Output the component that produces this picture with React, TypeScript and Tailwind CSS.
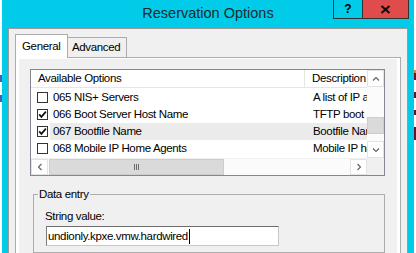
import React from 'react';

const options = [
  { name: '065 NIS+ Servers', desc: 'A list of IP addresses for NIS+ servers', checked: false, selected: false },
  { name: '066 Boot Server Host Name', desc: 'TFTP boot server host name', checked: true, selected: false },
  { name: '067 Bootfile Name', desc: 'Bootfile Name', checked: true, selected: true },
  { name: '068 Mobile IP Home Agents', desc: 'Mobile IP home agents in priority order', checked: false, selected: false },
];

function Chevron({ dir }: { dir: 'up' | 'down' | 'left' | 'right' }) {
  const vertical = dir === 'up' || dir === 'down';
  const d = {
    up: 'M1 4.5 L4 1.5 L7 4.5',
    down: 'M1 1.5 L4 4.5 L7 1.5',
    left: 'M4.5 1 L1.5 4 L4.5 7',
    right: 'M1.5 1 L4.5 4 L1.5 7',
  }[dir];
  return (
    <svg
      aria-hidden="true"
      width={vertical ? 8 : 6}
      height={vertical ? 6 : 8}
      viewBox={vertical ? '0 0 8 6' : '0 0 6 8'}
      fill="none"
    >
      <path d={d} stroke="#606060" strokeWidth="1.1" />
    </svg>
  );
}

function Checkbox({ checked }: { checked: boolean }) {
  return (
    <span className="flex h-[11px] w-[11px] shrink-0 items-center justify-center border border-[#333333] bg-white">
      {checked && (
        <svg aria-hidden="true" width="9" height="9" viewBox="0 0 9 9" fill="none">
          <path d="M1.2 4.4 L3.4 6.9 L7.9 1.6" stroke="#111111" strokeWidth="1.7" />
        </svg>
      )}
    </span>
  );
}

export default function App() {
  return (
    <div className="flex h-[253px] w-[416px] overflow-hidden bg-white font-['Liberation_Sans',Arial,sans-serif] text-[11.5px] tracking-[-0.35px] text-black">
      {/* edge of the window behind */}
      <div className="flex w-[2px] flex-col">
        <div className="mt-[75px] h-[7px] bg-[#3a64b8]" />
        <div className="mt-[13px] h-[7px] bg-[#3a64b8]" />
      </div>

      {/* dialog window */}
      <div className="flex w-[412px] flex-col bg-[#00cbe9] px-[6px]">
        {/* title bar */}
        <div className="relative -mx-[6px] h-[28px]">
          <div className="text-center text-[14.5px] leading-[26px] tracking-normal text-[#1e2a2c]">
            Reservation Options
          </div>
          <div className="absolute right-[5px] top-0 flex h-[19px]">
            <div className="flex w-[29px] items-center justify-center border-b border-l border-[#333333] text-[12px] font-bold tracking-normal">
              ?
            </div>
            <div className="flex w-[47px] items-center justify-center border-x border-b border-[#333333] bg-[#e04c4c]">
              <svg aria-hidden="true" width="11" height="9" viewBox="0 0 11 9" fill="none">
                <path d="M1.5 1 L9.5 8 M9.5 1 L1.5 8" stroke="#111111" strokeWidth="2.2" />
              </svg>
            </div>
          </div>
        </div>

        {/* client area */}
        <div className="flex flex-1 flex-col border-x border-t border-[#9a9a9a] bg-[#f0f0f0] px-[6px] pt-[5px]">
          {/* tabs */}
          <div className="flex items-end">
            <div className="relative z-10 -mb-px h-[24px] w-[53px] border border-b-0 border-[#acacac] bg-white pl-[6px] pt-[3px] leading-[16px]">
              General
            </div>
            <div className="h-[20px] w-[59px] border-r border-t border-[#acacac] bg-[#f0f0f0] pl-[4px] pt-[1px] leading-[16px]">
              Advanced
            </div>
          </div>

          {/* tab panel */}
          <div className="flex flex-1 flex-col border-x border-t border-[#acacac] bg-white px-[3px] pt-px">
            <div className="flex flex-1 flex-col bg-[#f0f0f0] pt-[10px]">
              {/* option list */}
              <div className="ml-[11px] w-[355px] border border-[#828790] bg-white">
                <div className="grid grid-cols-[336px_17px] grid-rows-[88px_17px]">
                  <div className="flex flex-col">
                    <div className="flex h-[18px] border-b border-[#e5e5e5] leading-[17px]">
                      <div className="w-[274px] border-r border-[#e5e5e5] pl-[7px]">Available Options</div>
                      <div className="flex-1 pl-[7px]">Description</div>
                    </div>
                    <div className="mt-px flex flex-col">
                      {options.map((o) => (
                        <div key={o.name} className="flex h-[17px] items-center pl-[6px]">
                          <Checkbox checked={o.checked} />
                          <div
                            className={`ml-[2px] flex h-full min-w-0 flex-1 items-center ${
                              o.selected ? 'bg-[#ebebeb]' : ''
                            }`}
                          >
                            <div className="w-[255px] shrink-0 pl-[3px]">{o.name}</div>
                            <div className="min-w-0 flex-1 overflow-hidden whitespace-nowrap pl-[8px]">{o.desc}</div>
                          </div>
                        </div>
                      ))}
                    </div>
                  </div>

                  {/* vertical scrollbar */}
                  <div className="flex flex-col bg-[#fbfbfb]">
                    <div className="flex h-[17px] items-center justify-center border border-[#e3e3e3] bg-white">
                      <Chevron dir="up" />
                    </div>
                    <div className="flex-1 pt-[30px]">
                      <div className="h-[17px] border border-[#cdcdcd] bg-[#dadada]" />
                    </div>
                    <div className="flex h-[17px] items-center justify-center border border-[#e3e3e3] bg-white">
                      <Chevron dir="down" />
                    </div>
                  </div>

                  {/* horizontal scrollbar */}
                  <div className="flex border-t border-[#f0f0f0] bg-[#fbfbfb]">
                    <div className="flex w-[17px] items-center justify-center border border-[#e3e3e3] bg-white">
                      <Chevron dir="left" />
                    </div>
                    <div className="ml-px flex w-[175px] items-center justify-center gap-[1px] border border-[#cdcdcd] bg-[#dadada]">
                      <span className="h-[6px] w-px bg-[#6a6a6a]" />
                      <span className="h-[6px] w-px bg-[#6a6a6a]" />
                      <span className="h-[6px] w-px bg-[#6a6a6a]" />
                    </div>
                    <div className="flex-1" />
                    <div className="flex w-[17px] items-center justify-center border border-[#e3e3e3] bg-white">
                      <Chevron dir="right" />
                    </div>
                  </div>
                  <div className="bg-[#f0f0f0]" />
                </div>
              </div>

              {/* data entry */}
              <fieldset className="ml-[14px] mt-[11px] w-[352px] flex-1 border border-[#adadad] pl-[4px]">
                <legend className="px-px leading-[14px]">Data entry</legend>
                <div className="flex flex-col pl-[7px] pt-[8px]">
                  <div className="leading-[14px]">String value:</div>
                  <div className="ml-px mt-[3px] flex h-[20px] w-[233px] items-center border border-[#c8c8c8] border-l-[#7a7a7a] border-t-[#6e6e6e] bg-white pl-px">
                    <span className="leading-[14px]">undionly.kpxe.vmw.hardwired</span>
                    <span className="ml-px h-[15px] w-px bg-black" />
                  </div>
                </div>
              </fieldset>
            </div>
          </div>
        </div>
      </div>

      {/* edge of the window behind, right */}
      <div className="flex w-[2px] flex-col">
        <div className="mt-[70px] h-[3px] bg-[#e08a2a]" />
        <div className="h-[7px] bg-[#6b1030]" />
        <div className="mt-[12px] h-[6px] bg-[#6b1030]" />
        <div className="mt-[12px] h-[5px] bg-[#6b1030]" />
        <div className="mt-[12px] h-[13px] bg-[#6b1030]" />
      </div>
    </div>
  );
}
